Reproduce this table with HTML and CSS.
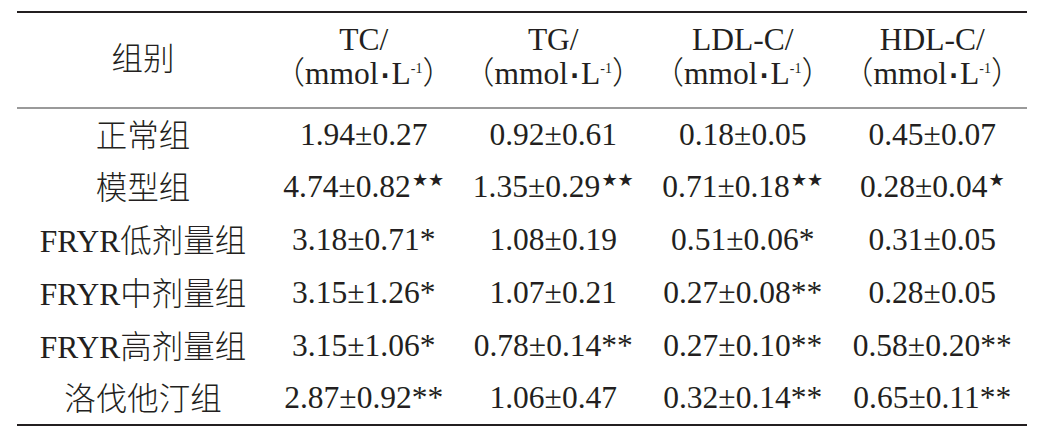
FILE: index.html
```html
<!DOCTYPE html>
<html lang="zh">
<head>
<meta charset="utf-8">
<link rel="stylesheet" href="styles.css">
</head>
<body>
<table class="data">
  <thead>
    <tr class="head">
      <th class="c1"><span class="zh">组别</span></th>
      <th>TC/<br><span class="unit"><span class="zh">（</span>mmol<span class="dot">·</span>L<sup>-1</sup><span class="zh">）</span></span></th>
      <th>TG/<br><span class="unit"><span class="zh">（</span>mmol<span class="dot">·</span>L<sup>-1</sup><span class="zh">）</span></span></th>
      <th>LDL-C/<br><span class="unit"><span class="zh">（</span>mmol<span class="dot">·</span>L<sup>-1</sup><span class="zh">）</span></span></th>
      <th>HDL-C/<br><span class="unit"><span class="zh">（</span>mmol<span class="dot">·</span>L<sup>-1</sup><span class="zh">）</span></span></th>
    </tr>
  </thead>
  <tbody>
    <tr><td class="c1"><span class="zh">正常组</span></td><td>1.94±0.27</td><td>0.92±0.61</td><td>0.18±0.05</td><td>0.45±0.07</td></tr>
    <tr><td class="c1"><span class="zh">模型组</span></td><td>4.74±0.82<span class="star">★★</span></td><td>1.35±0.29<span class="star">★★</span></td><td>0.71±0.18<span class="star">★★</span></td><td>0.28±0.04<span class="star">★</span></td></tr>
    <tr><td class="c1">FRYR<span class="zh">低剂量组</span></td><td>3.18±0.71*</td><td>1.08±0.19</td><td>0.51±0.06*</td><td>0.31±0.05</td></tr>
    <tr><td class="c1">FRYR<span class="zh">中剂量组</span></td><td>3.15±1.26*</td><td>1.07±0.21</td><td>0.27±0.08**</td><td>0.28±0.05</td></tr>
    <tr><td class="c1">FRYR<span class="zh">高剂量组</span></td><td>3.15±1.06*</td><td>0.78±0.14**</td><td>0.27±0.10**</td><td>0.58±0.20**</td></tr>
    <tr><td class="c1"><span class="zh">洛伐他汀组</span></td><td>2.87±0.92**</td><td>1.06±0.47</td><td>0.32±0.14**</td><td>0.65±0.11**</td></tr>
  </tbody>
</table>
</body>
</html>
```
FILE: styles.css
```css
html, body {
  margin: 0;
  padding: 0;
  background: #ffffff;
}

body {
  padding: 11px 0 0 17px;
  font-family: "Liberation Serif", "Noto Sans CJK SC", serif;
  font-size: 31.5px;
  font-weight: 400;
  color: #231f20;
}

.zh {
  font-family: "Noto Sans CJK SC", sans-serif;
  font-weight: 300;
  font-size: 31.5px;
}

.data {
  border-collapse: collapse;
  width: 1010px;
  table-layout: fixed;
  border-top: 2px solid #231f20;
  border-bottom: 2px solid #231f20;
}

.data th,
.data td {
  padding: 0;
  text-align: center;
  vertical-align: middle;
  white-space: nowrap;
  font-weight: 400;
  width: 189.5px;
}

.data .c1 {
  width: 252px;
}

.head {
  height: 96px;
  border-bottom: 2px solid #9a9a9a;
}

.head th {
  line-height: 31px;
  padding-bottom: 4px;
}

.data tbody tr {
  height: 52.8px;
}

.data td {
  line-height: 34px;
}

.dot {
  font-family: "DejaVu Sans", sans-serif;
  font-weight: bold;
  font-size: 24px;
  margin: 0 2px;
}

sup {
  font-size: 14px;
  line-height: 0;
  vertical-align: 11px;
}

.star {
  font-family: "DejaVu Sans", sans-serif;
  font-size: 18px;
  line-height: 0;
  vertical-align: 11px;
  margin-left: 1px;
}
```
